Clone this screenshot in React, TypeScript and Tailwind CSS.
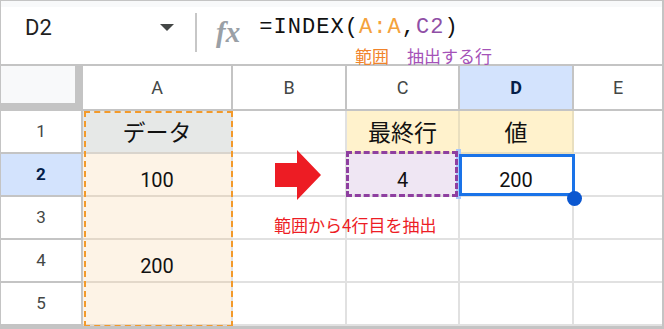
import { Fragment } from 'react';
import type { ReactNode } from 'react';

const GRID = 'grid grid-cols-[82px_150px_114px_113px_114px_88px] grid-rows-[45px_43px_43px_43px_43px_43px]';

function ColHeader({ label, active, last }: { label: string; active?: boolean; last?: boolean }) {
  return (
    <div
      className={`flex items-center justify-center border-b-2 border-[#c4c4c4] text-[18px] ${last ? '' : 'border-r-2'} ${
        active ? 'bg-[#d3e3fd] font-bold text-[#041e49]' : 'bg-white text-[#444746]'
      }`}
    >
      {label}
    </div>
  );
}

function RowHeader({ n, active }: { n: number; active?: boolean }) {
  return (
    <div
      className={`flex items-center justify-center border-r-2 border-b-2 border-[#c4c4c4] text-[17px] ${
        active ? 'bg-[#d3e3fd] font-bold text-[#041e49]' : 'bg-white text-[#444746]'
      }`}
    >
      {n}
    </div>
  );
}

function Cell({ children, className = '', cjk }: { children?: ReactNode; className?: string; cjk?: boolean }) {
  return (
    <div
      className={`flex items-end justify-center border-b-2 ${
        cjk ? 'pb-[3px] text-[23px] leading-[30px]' : 'pb-[3px] text-[20px] leading-[24px]'
      } text-[#111] ${className}`}
    >
      {children}
    </div>
  );
}

export default function App() {
  const rows = [1, 2, 3, 4, 5];
  const colA: Record<number, string> = { 2: '100', 4: '200' };

  return (
    <div className="w-[664px] h-[329px] overflow-hidden bg-white border-t border-l border-r-2 border-b-[3px] border-[#c4c4c4] font-['Roboto','Noto_Sans_CJK_JP',sans-serif]">
      {/* formula bar */}
      <div className="h-[65px] border-b-2 border-[#c4c4c4]">
        <div className="h-[6px] bg-[#f8f9fa]" />
        <div className="flex h-[40px] items-center">
          <div className="w-[194px] flex items-center pl-[24px] pr-[21px]">
            <span className="text-[22px] text-[#1f1f1f]">D2</span>
            <span className="ml-auto w-0 h-0 border-l-[7px] border-r-[7px] border-t-[7px] border-l-transparent border-r-transparent border-t-[#444746]" />
          </div>
          <div className="self-start mt-[6px] w-[2px] h-[39px] bg-[#c7c7c7]" />
          <span className="ml-[19px] mt-[10px] font-['Liberation_Serif',serif] italic font-bold text-[29px] text-[#9aa0a6] leading-none">
            fx
          </span>
          <span className="ml-[19px] font-['Liberation_Mono',monospace] text-[22px] tracking-[1.05px] text-[#111]">
            =INDEX(<span className="text-[#f4a23c]">A:A</span>,<span className="text-[#8f4fa6]">C2</span>)
          </span>
        </div>
        <div className="flex pl-[354px] text-[17px] leading-[18px] font-['Noto_Sans_CJK_JP',sans-serif]">
          <span className="text-[#f1832a]">範囲</span>
          <span className="ml-[18px] text-[#a552b8]">抽出する行</span>
        </div>
      </div>

      {/* sheet */}
      <div className={`relative ${GRID}`}>
        <div className="bg-[#c4c4c4]">
          <div className="w-[74px] h-[37px] bg-[#f8f9fa]" />
        </div>
        <ColHeader label="A" />
        <ColHeader label="B" />
        <ColHeader label="C" />
        <ColHeader label="D" active />
        <ColHeader label="E" last />

        {rows.map((r) => (
          <Fragment key={r}>
            <RowHeader n={r} active={r === 2} />
            <Cell
              cjk={r === 1}
              className={`border-r-2 border-r-[#e1e1e1] ${r === 1 ? 'bg-[#e6e8e7] border-b-[#d9d4cd]' : 'bg-[#fdf3e6] border-b-[#e3d8ca]'}`}
            >
              {r === 1 ? 'データ' : colA[r]}
            </Cell>
            <Cell className="border-r-2 border-[#e1e1e1]" />
            <Cell
              cjk={r === 1}
              className={`border-r-2 ${r === 1 ? 'bg-[#fff2cc] border-[#e9dfbf]' : r === 2 ? 'bg-[#efe6f3] border-[#e1e1e1]' : 'border-[#e1e1e1]'}`}
            >
              {r === 1 ? '最終行' : r === 2 ? '4' : null}
            </Cell>
            <Cell
              cjk={r === 1}
              className={`border-r-2 ${r === 1 ? 'bg-[#fff2cc] border-[#e9dfbf]' : 'border-[#e1e1e1]'}`}
            >
              {r === 1 ? '値' : r === 2 ? '200' : null}
            </Cell>
            <Cell className="border-[#e1e1e1]" />
          </Fragment>
        ))}

        {/* copy range on column A */}
        <div className="absolute left-[83px] top-[45px] w-[149px] h-[216px] border-2 border-dashed border-[#f39a2b]" />

        {/* arrow */}
        <svg className="absolute left-[273px] top-[84px]" width="48" height="51" viewBox="0 0 48 51">
          <path d="M1 13H23V0L47 25L23 50V37H1Z" fill="#ed1c24" />
        </svg>
        <div className="absolute left-[273px] top-[149px] whitespace-nowrap text-[17px] leading-[20px] text-[#ed1c24] font-['Noto_Sans_CJK_JP',sans-serif]">
          範囲から4行目を抽出
        </div>

        {/* C2 reference marquee */}
        <div className="absolute left-[455px] top-[83px] w-[5px] h-[50px] bg-[#a8c7fa]" />
        <div className="absolute left-[345px] top-[85px] w-[112px] h-[46px] border-[3px] border-dashed border-[#8e3fa0]" />

        {/* D2 selection */}
        <div className="absolute left-[458px] top-[88px] w-[116px] h-[42px] border-[3px] border-[#1a73e8]" />
        <div className="absolute left-[566px] top-[125px] w-[15px] h-[15px] rounded-full bg-[#0b57d0]" />
      </div>
    </div>
  );
}
